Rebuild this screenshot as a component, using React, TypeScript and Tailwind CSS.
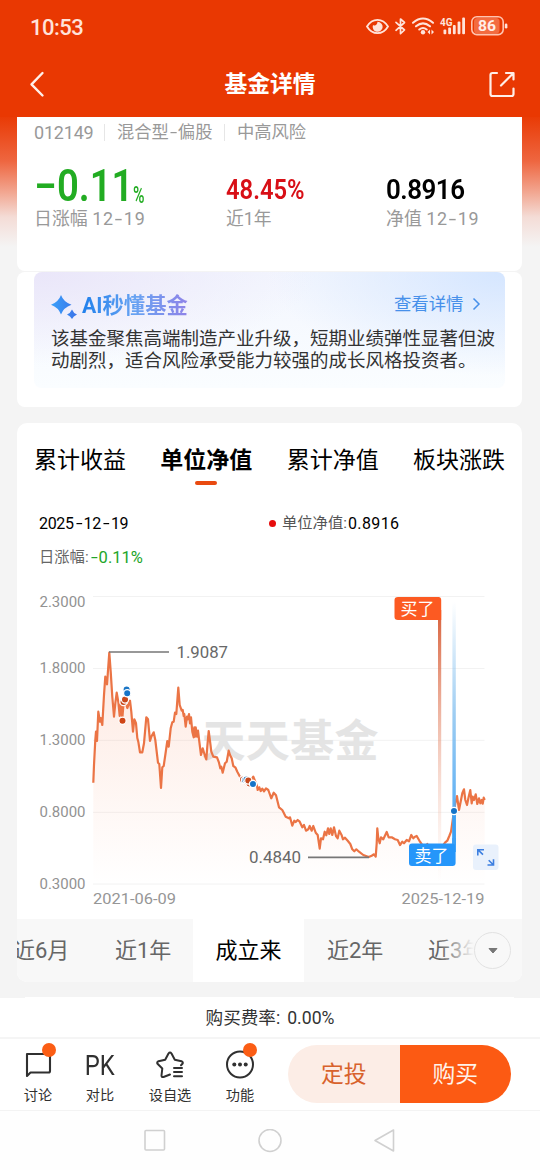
import React from "react";

const CURVE =
  "93.3,782.7 94,765 95.3,740 96,731.7 97,741 98.3,711.7 100,721.7 100.8,718 102.3,725 104,695 105.3,676.7 107,684.3 109.3,652.7 110.7,671.7 112.3,696.7 114,716.7 115.3,703.3 116.7,692.7 118.3,701.7 119.7,716 121,703 122.3,719 123.4,705 125,700 127.3,708 130,700.7 131.3,711.7 133,731.7 134.3,719.3 136,723.3 137.3,738 138.3,741.7 140,752.3 142.3,752.3 144,743.3 146.3,717.3 148,719.3 150,741 151.3,736.7 153.7,732.3 155.3,740 158,762.7 159.3,764 161,788 162.3,767.3 163.7,766 165.3,755 167.3,741 168.7,746.7 170.7,728.3 172.3,722.3 173.7,721.7 175,712.7 176.3,714 178.3,687.7 179.7,705 181.7,710.7 182.7,710 183.7,716 184.3,714 185.7,726.7 187,716.7 188,719.3 189,714 190,723.3 191,717.3 192.3,731.7 193.7,737.3 194.3,727.3 195,736.7 195.7,727.3 197,736.7 198,730.7 199.3,741.7 201,755 202.7,748.3 204.7,755 206.3,759.3 207.3,746.7 208.7,731 210.3,743.3 211.3,751.7 213.3,756.7 217,757.3 219,762.7 220.3,768.3 221.3,766.7 222.7,772.7 225,763.3 226.7,761.7 228.7,750.7 230,755 231.7,758.3 233.3,766 235.3,767.3 237.3,771.7 240,776.7 243,780 246,784 250,782 253.3,776.7 257,786 257.7,790 259.3,787.3 260.7,791 262.3,788.7 264,791.3 266,788.3 268.3,790 271.3,798.3 273.7,792.7 276,795.3 279,807.3 282.3,810 285.7,816.7 289,818.3 290,817.3 292.3,825.7 294.3,820.7 295.7,822 297.7,820 299.7,821.7 302.3,827.3 304,825 306,830.7 308.3,829.3 309.7,826 311.7,830.7 313.3,826 315.7,832.7 317.7,835 319.7,848.7 321,838.3 323,839.3 324.7,831.7 326.3,835.3 328,828.3 329.3,834 330.7,828.3 332.3,835 334,827.3 336,836 337.7,838.3 339.3,830.7 341.7,835.3 343,839.3 345,837.7 347.7,840.7 350.3,844 352.3,849.3 354.3,851.3 356.3,849.3 359,851.7 363.3,855 368.7,857 371.7,855.7 374,854.3 375.7,856.7 376.7,843.3 377.3,828.3 378.3,838.3 379.7,843.3 381,837.3 383.3,839.3 386.7,832 388.7,837.3 391.7,837.3 395,839.3 397.7,840 400,845 402.3,841.7 404,843.3 406.7,840 409,841.3 411.3,835 413.3,838.3 415,836.7 416.7,836 420,841.7 422.7,845.7 425.7,846.7 427.3,844 430,849.3 435,846.7 440,849.3 445,842.7 447.3,840.7 449.3,836 451,831.7 452,825 454,811 455.3,803.3 457,796 459,810 461,800 462.3,793.3 464,789.3 465.3,800 467,805 468.7,796.7 470.3,790 471.7,803.3 472.7,796.7 474,800 475.7,794.3 477.3,804 479,798.3 480.3,803.3 481.7,800 482.7,803.7 483.7,797.7 484.7,800";

function Dot({ x, y, c }: { x: number; y: number; c: string }) {
  return <circle cx={x} cy={y} r="3.6" fill={c} stroke="#fff" strokeWidth="1.2" />;
}

function Chart() {
  const rows: [string, number, number][] = [
    ["2.3000", 596.5, 607], ["1.8000", 668.5, 672.5], ["1.3000", 740.3, 745],
    ["0.8000", 812.3, 817], ["0.3000", 884, 889],
  ];
  return (
    <svg width="505" height="335" viewBox="17 584 505 335" className="block font-['Roboto','Noto_Sans_CJK_SC',sans-serif]">
      <defs>
        <linearGradient id="area" x1="0" y1="0" x2="0" y2="1">
          <stop offset="0" stopColor="#f87a4a" stopOpacity=".17" />
          <stop offset="1" stopColor="#f87a4a" stopOpacity="0" />
        </linearGradient>
        <linearGradient id="buy" x1="0" y1="0" x2="0" y2="1">
          <stop offset="0" stopColor="#d8603a" />
          <stop offset="1" stopColor="#f6c9b8" stopOpacity="0" />
        </linearGradient>
        <linearGradient id="sell" x1="0" y1="0" x2="0" y2="1">
          <stop offset="0" stopColor="#8cc4f0" stopOpacity="0" />
          <stop offset=".45" stopColor="#8cc4f0" stopOpacity=".85" />
          <stop offset="1" stopColor="#3ba0f5" />
        </linearGradient>
      </defs>
      {rows.map(([t, y, b]) => (
        <g key={t}>
          <path d={`M93 ${y}H484.5`} stroke="#f2f2f2" />
          <text x="39.5" y={b} fontSize="15" fill="#929292" textLength="46" lengthAdjust="spacingAndGlyphs">{t}</text>
        </g>
      ))}
      <text x="201.500" y="756.5" fontSize="44" fontWeight="700" fill="#e4e4e4" textLength="177">天天基金</text>
      <polygon points={`${CURVE} 484.7,884 93.3,884`} fill="url(#area)" />
      <polyline points={CURVE} fill="none" stroke="#eb7445" strokeWidth="2.200" strokeLinejoin="round" />
      <path d="M109 652H169M308 857.3H369" stroke="#777" strokeWidth="1.7" />
      <text x="176.5" y="657.5" fontSize="16" fill="#686868" textLength="51.5" lengthAdjust="spacingAndGlyphs">1.9087</text>
      <text x="249" y="862.5" fontSize="16" fill="#686868" textLength="52" lengthAdjust="spacingAndGlyphs">0.4840</text>
      <text x="93" y="903.5" fontSize="15" fill="#969696" textLength="83" lengthAdjust="spacingAndGlyphs">2021-06-09</text>
      <text x="401.5" y="903.5" fontSize="15" fill="#969696" textLength="83" lengthAdjust="spacingAndGlyphs">2025-12-19</text>
      <Dot x={123.5} y={702} c="#c8481c" />
      <Dot x={125} y={699.5} c="#c8481c" />
      <Dot x={122.5} y={720.7} c="#cf4516" />
      <Dot x={126.6} y={689.5} c="#1a75c5" />
      <Dot x={127.2} y={693.3} c="#1674c8" />
      <Dot x={243} y={779.5} c="#ca5630" />
      <Dot x={245} y={780} c="#2f79bd" />
      <Dot x={247.5} y={781.5} c="#ca5630" />
      <Dot x={246.5} y={779.5} c="#2f79bd" />
      <Dot x={249.5} y={783.5} c="#ca5630" />
      <Dot x={248.3} y={780.5} c="#c8481c" />
      <Dot x={253} y={784} c="#1674c8" />
      <rect x="438" y="610" width="3.2" height="272" fill="url(#buy)" />
      <rect x="452.4" y="602" width="3.4" height="250" fill="url(#sell)" />
      <path d="M398 597H438.5Q441.2 597 441.2 600V620H398Q394.5 620 394.5 617V600Q394.5 597 398 597Z" fill="#fc5a22" />
      <text x="400.5" y="614.8" fontSize="17" fill="#fff" textLength="34">买了</text>
      <path d="M412 843.5H452.400V838H455.6V863Q455.6 866 452.5 866H412Q409 866 409 863V846.500Q409 843.5 412 843.5Z" fill="#2596fa" />
      <path d="M452.400 843.5V811h3.400v34z" fill="#3ba0f5" />
      <text x="414.500" y="861.5" fontSize="17" fill="#fff" textLength="34">卖了</text>
      <Dot x={454} y={811} c="#1674c8" />
      <rect x="473" y="844.5" width="25.500" height="25.500" rx="3" fill="#e9f1fc" />
      <path d="M477.800 855.500V849.700H484M478.300 850.200L483 854.700M487.500 865H493.500V859.200M488.700 860.200L493 864.500" stroke="#3d7fe0" strokeWidth="1.6" fill="none" />
    </svg>
  );
}

function StatusIcons() {
  return (
    <svg width="144" height="26" viewBox="364 13 144 26" className="block">
      <g stroke="#ffe3da" fill="none" strokeWidth="1.8" strokeLinecap="round">
        <path d="M367 26.500Q371 19.800 377.500 19.800T388 26.500Q384 33.200 377.500 33.200T367 26.500Z" />
        <path d="M396 22.300L404.500 30 400.500 33.700V19L404.500 22.500 396 30.300" strokeWidth="1.700" strokeLinejoin="round" />
        <path d="M413 22.700Q423 14.300 433 22.700M416 26.300Q423 20.300 430 26.300M419.300 29.500Q423 26.500 426.700 29.500" strokeWidth="2.100" />
      </g>
      <path d="M377.500 21.800a5 5 0 1 1-4.500 3.200q2 1.300 3.300-.2t1.200-3Z" fill="#ffe3da" />
      <circle cx="423" cy="32.300" r="2.200" fill="#ffe3da" />
      <path d="M430 29.500v5l-2.500-2.500ZM431.500 29.500v5l2.500-2.500Z" fill="#ffe3da" />
      <g fill="#ffe3da">
        <rect x="443.500" y="29.500" width="2.800" height="4.800" rx="1" />
        <rect x="448.200" y="27.500" width="2.800" height="6.800" rx="1" />
        <rect x="452.900" y="25" width="2.800" height="9.300" rx="1" />
        <rect x="457.600" y="21.500" width="2.800" height="12.800" rx="1" />
        <rect x="462.200" y="17.500" width="2.800" height="16.800" rx="1" />
        <rect x="504.800" y="23.500" width="2.600" height="5" rx="1.300" />
      </g>
      <text x="440" y="25.800" fontSize="11" fontWeight="700" fill="#ffe3da" fontFamily="Roboto" textLength="12.500" lengthAdjust="spacingAndGlyphs">4G</text>
      <rect x="474" y="18" width="25.500" height="15.500" rx="3.500" fill="#f36b40" />
      <rect x="471.800" y="16.800" width="31.400" height="17.800" rx="5" stroke="#ffc3af" strokeWidth="1.600" fill="none" />
      <text x="478" y="31.300" fontSize="15.500" fontWeight="700" fill="#ffeee8" fontFamily="Roboto" textLength="18" lengthAdjust="spacingAndGlyphs">86</text>
    </svg>
  );
}

function Tool({ label, badge, children }: { label: string; badge?: string; children: React.ReactNode }) {
  return (
    <div className="relative flex w-[50px] flex-col items-center">
      <div className="flex h-[38px] items-center justify-center">{children}</div>
      <span className="mt-[2px] whitespace-nowrap text-[14.200px] leading-[18px] text-[#303030]">{label}</span>
      {badge && <i className={"absolute top-[-3.500px] size-[14px] rounded-full bg-[#fb5d14] " + badge} />}
    </div>
  );
}

function Hyphen() {
  return <span className="inline-block w-[10px] scale-x-150 text-center">-</span>;
}

export default function App() {
  return (
    <div className="flex h-[1170px] w-[540px] flex-col overflow-hidden bg-[#f4f4f4] font-['Roboto','Noto_Sans_CJK_SC',sans-serif] text-black">
      <header className="h-[117px] shrink-0 bg-[#e93802]">
        <div className="flex h-[52px] items-center justify-between pl-[30px] pr-[32px]">
          <span className="pt-[3px] text-[22px] font-medium leading-none tracking-[-0.500px] text-[#ffe3da]">10:53</span>
          <StatusIcons />
        </div>
        <div className="flex h-[64px] items-center justify-between pl-[29px] pr-[24px]">
          <svg width="28" height="28" viewBox="0 0 28 28" fill="none" stroke="#fff0ea" strokeWidth="2.400" strokeLinecap="round" strokeLinejoin="round"><path d="M13.500 3L2.500 14.300 13.500 25.500" /></svg>
          <h1 className="mr-[5px] pt-[2px] text-[22.800px] font-bold leading-none text-white">基金详情</h1>
          <svg width="28" height="28" viewBox="0 0 28 28" fill="none" stroke="#ffeee8" strokeWidth="2.200" strokeLinecap="round" strokeLinejoin="round"><path d="M9 3H4.500Q2.500 3 2.500 5V24Q2.500 26 4.500 26H23.500Q25.500 26 25.500 24V18.500M18 3H25.500V9.500M25 3.500L13 15.500" /></svg>
        </div>
      </header>

      <main className="flex h-[881px] shrink-0 flex-col bg-[linear-gradient(180deg,#e93b06_0px,#ee6640_44px,#f2a893_76px,#f4dcd6_100px,#f4f4f4_130px)] px-[17px] pr-[18px]">
        <section className="flex h-[154px] shrink-0 flex-col rounded-b-[8px] bg-white px-[17px] pt-[5px]">
          <div className="flex h-[20px] items-center text-[17.300px] leading-[20px] text-[#999]">
            <span className="w-[70px] pt-px text-[18px] tracking-[-0.200px]">012149</span>
            <i className="h-[17px] w-px bg-[#e6e6e6]" />
            <span className="ml-[12px] w-[107px] whitespace-nowrap">混合型<span className="inline-block w-[9px] scale-x-150 text-center">-</span>偏股</span>
            <i className="h-[17px] w-px bg-[#e6e6e6]" />
            <span className="ml-[12px]">中高风险</span>
          </div>
          <div className="mt-[20px] grid h-[66px] grid-cols-[192px_160px_1fr]">
            <div className="flex flex-col">
              <div className="flex h-[45px] items-end font-bold text-[#22ac22]">
                <span className="inline-block w-[23px] origin-left scale-x-[1.450] pb-[3px] text-[44px] font-semibold leading-[40px]">-</span>
                <span className="flex w-[76px] whitespace-nowrap pb-px text-[44.500px] font-semibold leading-[40px]"><span className="inline-block origin-left scale-x-[.860]">0.11</span></span>
                <span className="inline-block w-[14px] origin-left scale-x-[.650] text-[24px] font-medium leading-[23px]">%</span>
              </div>
              <span className="mt-[3px] whitespace-nowrap text-[17.900px] leading-[18px] text-[#999]">日涨幅 <span className="tracking-[0.800px]">12<Hyphen />19</span></span>
            </div>
            <div className="flex flex-col">
              <span className="h-[45px] origin-left scale-x-[.880] pt-[13px] text-[27px] font-semibold leading-[30px] text-[#d80f16]">48.45%</span>
              <span className="mt-[3px] text-[17.800px] leading-[18px] text-[#999]">近1年</span>
            </div>
            <div className="flex flex-col">
              <span className="h-[45px] origin-left scale-x-[.960] pt-[13px] text-[27px] font-semibold leading-[30px] tracking-[-0.500px]">0.8916</span>
              <span className="mt-[3px] text-[17.900px] leading-[18px] text-[#999]">净值 <span className="tracking-[0.700px]">12<Hyphen />19</span></span>
            </div>
          </div>
        </section>

        <section className="mt-px h-[135px] shrink-0 rounded-[8px] bg-white px-[17px]">
          <div className="h-[116px] rounded-[8px] bg-[radial-gradient(ellipse_60%_80%_at_0%_0%,#eae6f9,transparent),radial-gradient(ellipse_50%_90%_at_100%_0%,#d5e6ff,transparent),linear-gradient(180deg,#f3f6fe,#fafdff)] px-[17px] pr-[8px] pt-[20px]">
            <div className="flex h-[26px] items-center">
              <svg width="30" height="26" viewBox="0 0 30 26" className="shrink-0 overflow-visible"><defs><linearGradient id="sp"><stop stopColor="#3aa0fa" /><stop offset="1" stopColor="#3b74e8" /></linearGradient></defs><path fill="url(#sp)" d="M10 3Q12.500 10 20.500 12.700 12.500 15.500 10 22.500 7.500 15.500 0 12.700 7.500 10 10 3ZM21 17.500Q22.300 21 26 22.500 22.300 24 21 27 19.500 24 16 22.500 19.500 21 21 17.500Z" /></svg>
              <h2 className="mt-[2px] ml-px bg-[linear-gradient(90deg,#2080ec,#68a3f2_50%,#8f83e8)] bg-clip-text text-[21.300px] font-bold leading-[26px] text-transparent">AI秒懂基金</h2>
              <span className="ml-auto text-[17.400px] leading-none text-[#4790ea]">查看详情</span>
              <svg width="20" height="18" viewBox="0 0 20 18" className="mr-[9.500px] ml-[4px]" fill="none" stroke="#4790ea" strokeWidth="1.500"><path d="M5.500 2.500L11 8 5.500 13.500" /></svg>
            </div>
            <p className="mt-[11px] whitespace-nowrap text-[18.500px] leading-[21.500px] text-[#333]">该基金聚焦高端制造产业升级，短期业绩弹性显著但波<br />动剧烈，适合风险承受能力较强的成长风格投资者。</p>
          </div>
        </section>

        <section className="mt-[16px] flex h-[559px] shrink-0 flex-col overflow-hidden rounded-[10px] bg-white">
          <nav className="flex h-[74px] shrink-0 justify-between px-[17px] pt-[24px] text-[23px] leading-[28px]">
            <span>累计收益</span>
            <span className="flex flex-col items-center font-bold">单位净值<i className="mt-[6px] h-[4px] w-[22px] rounded-full bg-[#e94a10]" /></span>
            <span>累计净值</span>
            <span>板块涨跌</span>
          </nav>
          <div className="flex h-[52px] shrink-0 items-center pl-[22px] pt-px text-[15.300px] leading-none">
            <span className="w-[230px] text-[16px] tracking-[-0.350px]">2025<Hyphen />12<Hyphen />19</span>
            <i className="size-[7px] rounded-full bg-[#e60c0c]" />
            <span className="ml-[6px] text-[#555]">单位净值:</span><span className="ml-px text-[16px] tracking-[0.400px]">0.8916</span>
          </div>
          <div className="flex h-[14px] shrink-0 items-center pl-[22px] pt-[4px] text-[15.300px] leading-none text-[#666]">日涨幅:<span className="ml-px text-[16.500px] text-[#22a528]"><span className="inline-block w-[9px] scale-x-150 text-center">-</span>0.11%</span></div>
          <div className="h-[21px] shrink-0" />
          <Chart />
          <div className="relative flex h-[63px] shrink-0 bg-[#f8f8f8] text-[22px] leading-[63px] text-[#666]">
            <span className="w-[98px] -indent-[4px]">近6月</span>
            <span className="w-[78px] whitespace-nowrap">近1年</span>
            <span className="w-[111px] bg-white text-center text-black">成立来</span>
            <span className="w-[102px] pl-[23px]">近2年</span>
            <span className="w-[70px] whitespace-nowrap pl-[22px]">近3年</span>
            <div className="absolute right-0 top-0 flex h-full w-[82px] items-center justify-end bg-[linear-gradient(90deg,#f8f8f800,#f8f8f8_34px)] pr-[11px]">
              <span className="flex size-[37px] items-center justify-center rounded-full border border-[#e2e2e2] bg-[#f8f8f8]"><svg width="10" height="7" viewBox="0 0 10 7"><path d="M1 1.500H9L5 6Z" fill="#777" stroke="#777" strokeLinejoin="round" /></svg></span>
            </div>
          </div>
        </section>
        <div className="mx-[8px] mt-[15px] h-px shrink-0 bg-white" />
      </main>

      <div className="flex h-[41px] shrink-0 items-center justify-center border-b-2 border-[#f5f5f5] bg-white pt-[2px] text-[17.600px] leading-none text-[#333]">购买费率:<span className="ml-[7px]">0.00%</span></div>
      <div className="flex h-[72px] shrink-0 border-b border-[#f3f3f3] bg-white">
        <div className="flex pl-[13px] pt-[7px]">
          <Tool label="讨论" badge="left-[28.500px]">
            <svg width="28" height="28" viewBox="0 0 28 28" fill="none" stroke="#303030" strokeWidth="2.100" strokeLinejoin="round"><path d="M3 3H24.500Q26 3 26 4.500V20Q26 21.500 24.500 21.500H6.500L3 25Z" /></svg>
          </Tool>
          <div className="ml-[12px]"><Tool label="对比"><span className="origin-center scale-x-[.850] pt-[2px] text-[28px] leading-none text-[#303030]">PK</span></Tool></div>
          <div className="ml-[20px]"><Tool label="设自选">
            <svg width="30" height="30" viewBox="0 0 30 30" fill="none" stroke="#303030" strokeWidth="2" strokeLinecap="round" strokeLinejoin="round"><path d="M15 24.500L8.500 27Q6.500 27.500 6.500 25.500L7.300 18.500 2.500 13.800Q1.500 12 3.500 11.300L10.200 9.800 13.500 3.500Q15 1.500 16.500 3.500L19.800 9.800 26.500 11.300Q28.500 12 27.500 13.800L26 15.300M19 18H27M19 22H27M19 26.300H27" /></svg>
          </Tool></div>
          <div className="ml-[20px]"><Tool label="功能" badge="left-[28px]">
            <svg width="30" height="30" viewBox="0 0 30 30" fill="none" stroke="#303030" strokeWidth="2"><circle cx="15" cy="14.500" r="13" /><g fill="#303030" stroke="none"><circle cx="9.300" cy="14.500" r="2" /><circle cx="15" cy="14.500" r="2" /><circle cx="20.700" cy="14.500" r="2" /></g></svg>
          </Tool></div>
        </div>
        <div className="ml-[23px] mt-[6px] flex h-[58px] w-[223px] overflow-hidden rounded-full text-[22.800px] leading-[59px]">
          <span className="flex-1 bg-[#fcede6] text-center text-[#d8622c]">定投</span>
          <span className="flex-1 bg-[#fc5a13] text-center text-[#fff3ea]">购买</span>
        </div>
      </div>
      <div className="flex h-[59px] shrink-0 items-center justify-center gap-[91px] bg-[#fefefe]">
        <svg width="24" height="24" viewBox="0 0 24 24" fill="none" stroke="#d0d0d0" strokeWidth="1.600"><rect x="2" y="1.500" width="19.500" height="19.500" rx="1" /></svg>
        <svg width="24" height="24" viewBox="0 0 24 24" fill="none" stroke="#d0d0d0" strokeWidth="1.600"><circle cx="12" cy="11.500" r="11" /></svg>
        <svg width="24" height="24" viewBox="0 0 24 24" fill="none" stroke="#d0d0d0" strokeWidth="1.600" strokeLinejoin="round"><path d="M20.500 1V22L2 11.500Z" /></svg>
      </div>
    </div>
  );
}
